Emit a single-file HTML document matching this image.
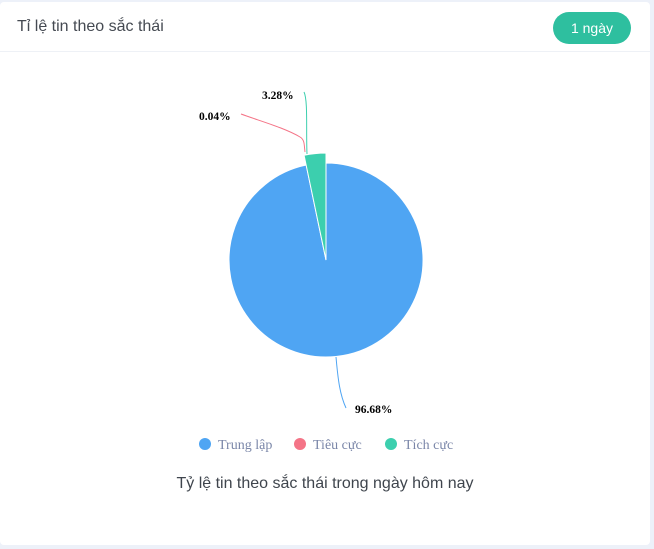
<!DOCTYPE html>
<html><head><meta charset="utf-8"><style>
html,body{margin:0;padding:0;width:654px;height:549px;background:#edf1f9;overflow:hidden;font-family:"Liberation Sans",sans-serif}
.card{position:absolute;left:0;top:2px;width:650px;height:543px;background:#fff;border-radius:4px}
.hdr{height:49px;border-bottom:1px solid #eef1f6;position:relative}
.title{position:absolute;left:17px;top:16px;font-size:16px;color:#454a52}
.btn{position:absolute;left:553px;top:10px;width:78px;height:32px;border-radius:16px;background:#2ebf9f;color:#fff;font-size:14px;line-height:32px;text-align:center}
.cap{position:absolute;left:0;width:650px;top:475px;text-align:center;font-size:16px;color:#3f454d}
</style></head><body>
<div class="card"><div class="hdr"><div class="title">Tỉ lệ tin theo sắc thái</div><div class="btn">1 ngày</div></div></div>
<svg width="654" height="549" style="position:absolute;left:0;top:0">
<path d="M326,260 L326,163 A97,97 0 1,1 306.2,165.05 Z" fill="#4fa5f3" stroke="#fff" stroke-width="1"/>
<path d="M326,260 L304.1,155.3 A107,107 0 0,1 326,153 Z" fill="#3ccfae" stroke="#fff" stroke-width="1"/>
<path d="M307,154 C306,130 308,100 304,92" fill="none" stroke="#3ccfae" stroke-width="1"/>
<path d="M305,152 C304,145 305,140 300,137 C285,128 260,121 241,114" fill="none" stroke="#f47487" stroke-width="1"/>
<path d="M336,357 C338,380 340,395 346,408" fill="none" stroke="#4fa5f3" stroke-width="1"/>
<g font-family="Liberation Serif,serif" font-weight="bold" font-size="11.5" fill="#000">
<text x="262" y="99">3.28%</text>
<text x="199" y="120">0.04%</text>
<text x="355" y="413">96.68%</text>
</g>
<g font-family="Liberation Serif,serif" font-size="14" fill="#7a86a8">
<circle cx="205" cy="444" r="6" fill="#4fa5f3"/><text x="218" y="449">Trung lập</text>
<circle cx="300" cy="444" r="6" fill="#f47487"/><text x="313" y="449">Tiêu cực</text>
<circle cx="391" cy="444" r="6" fill="#3ccfae"/><text x="404" y="449">Tích cực</text>
</g>
</svg>
<div class="cap">Tỷ lệ tin theo sắc thái trong ngày hôm nay</div>
</body></html>
